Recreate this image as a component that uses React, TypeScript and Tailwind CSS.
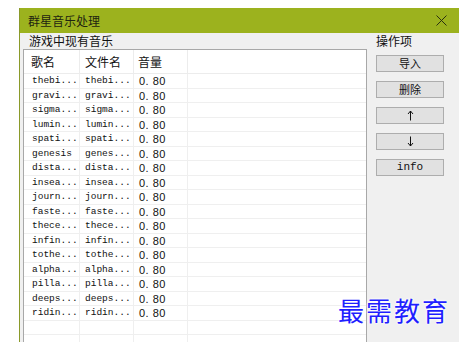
const rows = [
  ["thebi...", "thebi..."],
  ["gravi...", "gravi..."],
  ["sigma...", "sigma..."],
  ["lumin...", "lumin..."],
  ["spati...", "spati..."],
  ["genesis", "genes..."],
  ["dista...", "dista..."],
  ["insea...", "insea..."],
  ["journ...", "journ..."],
  ["faste...", "faste..."],
  ["thece...", "thece..."],
  ["infin...", "infin..."],
  ["tothe...", "tothe..."],
  ["alpha...", "alpha..."],
  ["pilla...", "pilla..."],
  ["deeps...", "deeps..."],
  ["ridin...", "ridin..."],
  ["", ""],
  ["", ""],
];

const buttons = ["导入", "删除", "↑", "↓", "info"];

const cjk = "font-['Noto_Sans_CJK_SC',sans-serif]";
const mono = "font-['Liberation_Mono','Noto_Sans_CJK_SC',monospace]";

function ArrowIcon({ up }: { up: boolean }) {
  // thin arrow like the original button glyph
  return (
    <svg width="7" height="11" viewBox="0 0 7 11" className="stroke-[#111]" fill="none">
      {up ? (
        <path d="M3.5 1V10.5M1 4L3.5 1L6 4" strokeWidth="1" />
      ) : (
        <path d="M3.5 0.5V10M1 7L3.5 10L6 7" strokeWidth="1" />
      )}
    </svg>
  );
}

export default function App() {
  return (
    <div className="relative h-[342px] w-[459px] overflow-hidden bg-white">
      <div className="ml-[19px] mt-[8px] flex h-[334px] flex-col border-l border-[#8a9a2a]">
        <div className="flex h-[25px] shrink-0 items-center justify-between bg-[#9cb21e] pl-[8px] pr-[12px]">
          <span className={`${cjk} text-[12px] text-[#1e2410]`}>群星音乐处理</span>
          <svg width="11" height="11" viewBox="0 0 11 11" className="stroke-[#2a3010]">
            <path d="M0.5 0.5L10.5 10.5M10.5 0.5L0.5 10.5" strokeWidth="1" fill="none" />
          </svg>
        </div>
        <div className="flex min-h-0 flex-1 overflow-hidden bg-[#f0f0f0]">
          <div className="ml-[3px] flex w-[344px] shrink-0 flex-col">
            <div className={`${cjk} h-[16px] shrink-0 pl-[6px] text-[12px] leading-[16px] text-[#111]`}>
              游戏中现有音乐
            </div>
            <div className="flex-1 border border-[#a8a8a8] bg-white">
              <div className={`${cjk} flex h-[24px] items-center border-b border-[#ececec] text-[12px] text-[#111]`}>
                <div className="w-[56px] border-r border-[#ececec] pl-[7px] leading-[24px]">歌名</div>
                <div className="w-[54px] border-r border-[#ececec] pl-[5px] leading-[24px]">文件名</div>
                <div className="w-[54px] border-r border-[#ececec] pl-[4px] leading-[24px]">音量</div>
              </div>
              {rows.map(([a, b], i) => (
                <div key={i} className={`${mono} flex h-[14.5px] border-b border-[#efefef] text-[9.5px] leading-[14px] text-[#111]`}>
                  <div className="w-[56px] border-r border-[#efefef] pl-[8px]">{a}</div>
                  <div className="w-[54px] border-r border-[#efefef] pl-[5px]">{b}</div>
                  <div className="w-[54px] border-r border-[#efefef] pl-[5px] font-['Liberation_Sans',sans-serif] text-[11px] tracking-[0.5px]">
                    {a || b ? "0. 80" : ""}
                  </div>
                </div>
              ))}
            </div>
          </div>
          <div className="ml-[9px] flex w-[68px] shrink-0 flex-col">
            <div className={`${cjk} h-[16px] text-[12px] leading-[16px] text-[#111]`}>操作项</div>
            <div className="mt-[6px] flex flex-col gap-[9px]">
              {buttons.map((b) => (
                <div
                  key={b}
                  className={`${b === "info" ? mono : cjk} flex h-[17px] items-center justify-center border border-[#adadad] bg-[#e1e1e1] text-[11px] text-[#111]`}
                >
                  {b === "↑" ? <ArrowIcon up /> : b === "↓" ? <ArrowIcon up={false} /> : b}
                </div>
              ))}
            </div>
          </div>
        </div>
      </div>
      <div
        className={`absolute left-[338px] top-[294px] ${cjk} text-[26px] leading-[32px] tracking-[2px] text-[#1f1fff] [text-shadow:0_0_2px_#fff,0_0_2px_#fff,0_0_3px_#fff]`}
      >
        最需教育
      </div>
    </div>
  );
}
